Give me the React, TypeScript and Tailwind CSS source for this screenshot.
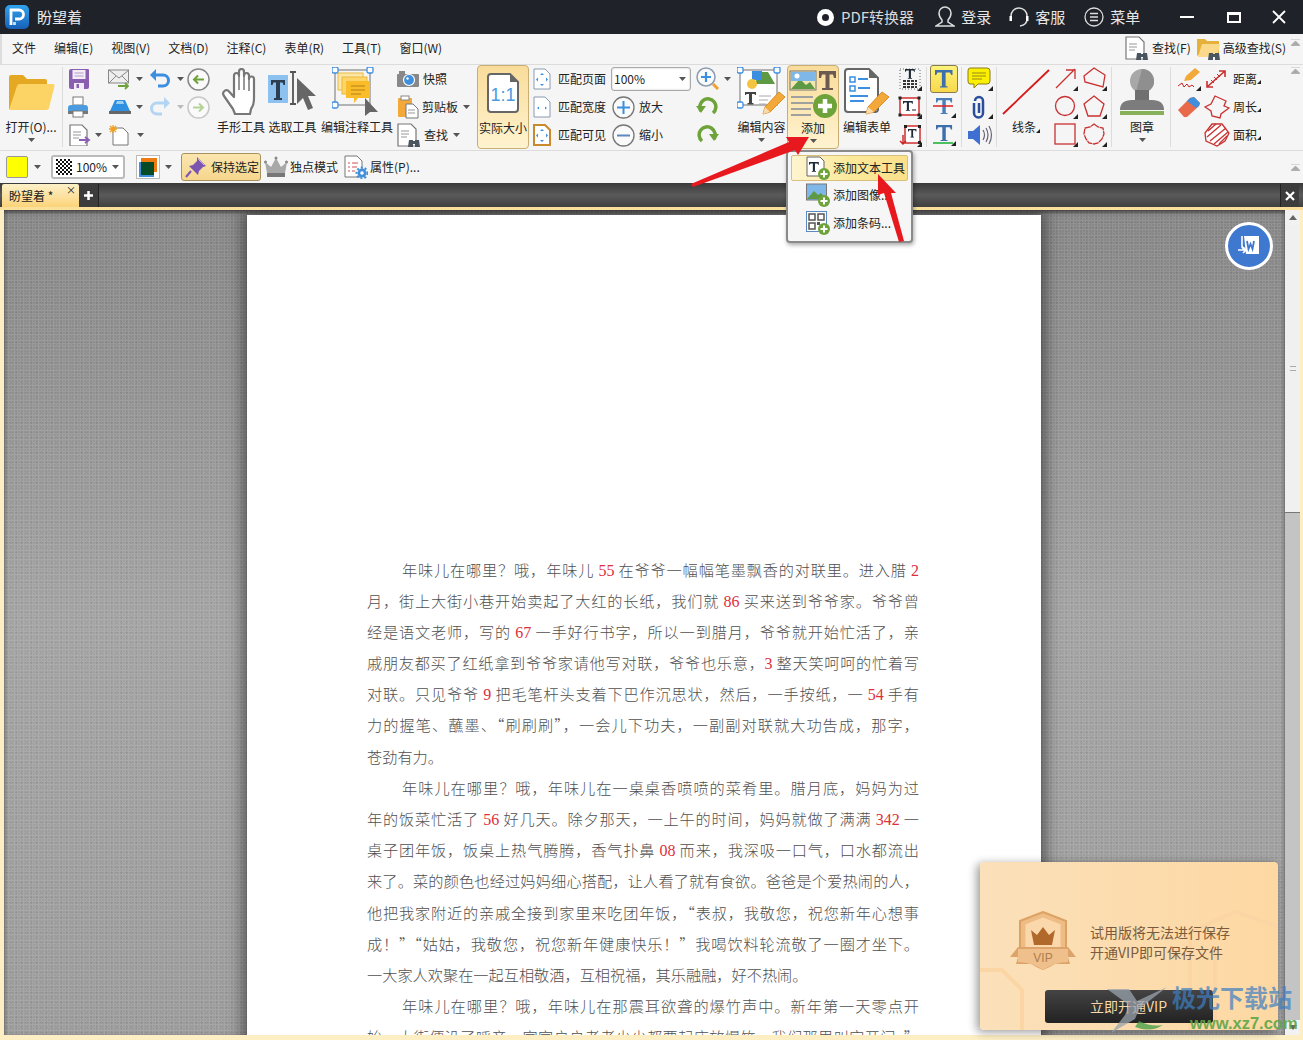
import React from "react";

const Caret = ({ c = "#555" }: { c?: string }) => (
  <svg width="7" height="4" viewBox="0 0 7 4" className="shrink-0"><path d="M0 0h7L3.500 4z" fill={c} /></svg>
);
const Tri = () => (
  <svg width="4" height="4" viewBox="0 0 4 4" className="mb-[2px] self-end shrink-0"><path d="M4 4H0l4-4z" fill="#222" /></svg>
);
const Corner = ({ x, y }: { x: number; y: number }) => <path d={`M${x} ${y}h-5l5-5z`} fill="#222" />;

const Logo = () => (
  <svg width="24" height="24" viewBox="0 0 24 24">
    <defs><linearGradient id="lg" x1="0" y1="0" x2="0" y2="1"><stop offset="0" stopColor="#2fa4ee" /><stop offset="1" stopColor="#1761b8" /></linearGradient></defs>
    <rect width="24" height="24" rx="5" fill="url(#lg)" />
    <path d="M6 20V5h8a4.500 4.500 0 0 1 0 9H10" fill="none" stroke="#fff" strokeWidth="2.800" />
    <path d="M9.500 20v-3" stroke="#bfe6ff" strokeWidth="2.800" />
  </svg>
);

const Folder = () => (
  <svg width="48" height="38" viewBox="0 0 48 38">
    <path d="M2 35V3q0-2 2-2h12l4 4h18q2 0 2 2v8H12L6 35z" fill="#e5a823" />
    <path d="M2 36 10 12q.5-2 2.500-2H46q2 0 1.500 2L42 34q-.5 2-2.500 2z" fill="#fbd465" />
  </svg>
);
const Save = () => (
  <svg width="22" height="22" viewBox="0 0 22 22">
    <path d="M1 3q0-2 2-2h17q1 0 1 1v17q0 2-2 2H3q-2 0-2-2z" fill="#8a5fb0" />
    <rect x="4.500" y="2" width="13" height="9" fill="#f2ecf7" /><path d="M6.500 5h9M6.500 8h9" stroke="#b59acb" />
    <rect x="6" y="15" width="10" height="6" fill="#f2ecf7" /><rect x="8.500" y="16" width="2.500" height="4" fill="#8a5fb0" />
  </svg>
);
const Print = () => (
  <svg width="22" height="22" viewBox="0 0 22 22">
    <rect x="6" y="1" width="10" height="8" fill="#fff" stroke="#7a7a7a" />
    <path d="M1 12q0-3 3-3h14q3 0 3 3v4H1z" fill="#4a9be0" /><rect x="1" y="15" width="20" height="3" fill="#777" />
    <rect x="6" y="15" width="10" height="6" fill="#fff" stroke="#7a7a7a" />
  </svg>
);
const Doc = ({ w = 18, h = 22, s = "#777" }: { w?: number; h?: number; s?: string }) => (
  <path d={`M1 1h${w - 6}l5 5v${h - 6}H1z`} fill="#fff" stroke={s} strokeWidth="1.200" />
);
const ExportI = () => (
  <svg width="23" height="22" viewBox="0 0 23 22">
    <Doc /><path d="M4 8h8M4 11h8M4 14h6" stroke="#999" /><path d="M10 16h9m-3-3 4 3-4 3" fill="none" stroke="#8a5fb0" strokeWidth="1.800" />
  </svg>
);
const Mail = () => (
  <svg width="21" height="22" viewBox="0 0 21 22">
    <rect x="0.500" y="2" width="20" height="13" fill="#eee" stroke="#888" /><path d="m1 2 10 8 10-8M1 15l7-7M21 15l-7-7" fill="none" stroke="#888" />
    <path d="M10 18h10m-3-3 3 3-3 3" fill="none" stroke="#6ea33a" strokeWidth="1.800" />
  </svg>
);
const Stamp = () => (
  <svg width="24" height="16" viewBox="0 0 24 16">
    <path d="M7 1h10l5 11H2z" fill="#2f8fe0" /><path d="M9 2h6l1 3H8z" fill="#9bd0f5" /><rect x="1" y="12" width="22" height="3" fill="#666" />
  </svg>
);
const NewDoc = () => (
  <svg width="22" height="22" viewBox="0 0 22 22">
    <path d="M5 4h10l5 5v12H5z" fill="#fff" stroke="#777" /><path d="M5 1v8M1 5h8M2 2l6 6M8 2 2 8" stroke="#f0a020" strokeWidth="1.300" />
  </svg>
);
const Undo = ({ c = "#3b8ee0" }: { c?: string }) => (
  <svg width="22" height="20" viewBox="0 0 22 20">
    <path d="M5 6h9a5 5 0 0 1 0 11H9" fill="none" stroke={c} strokeWidth="3" /><path d="M7 0 1 6l6 6z" fill={c} />
  </svg>
);
const Redo = ({ c = "#b3d5f3" }: { c?: string }) => (
  <svg width="22" height="20" viewBox="0 0 22 20">
    <path d="M17 6H8a5 5 0 0 0 0 11h5" fill="none" stroke={c} strokeWidth="3" /><path d="m15 0 6 6-6 6z" fill={c} />
  </svg>
);
const NavCircle = ({ back, c, b }: { back?: boolean; c: string; b: string }) => (
  <svg width="23" height="23" viewBox="0 0 23 23">
    <circle cx="11.500" cy="11.500" r="10.500" fill="#fafafa" stroke={b} strokeWidth="1.500" />
    <path d={back ? "M17 11.500H7m4-4-4 4 4 4" : "M6 11.500h10m-4-4 4 4-4 4"} fill="none" stroke={c} strokeWidth="2" />
  </svg>
);
const Hand = () => (
  <svg width="38" height="48" viewBox="0 0 38 48">
    <path d="M12 28V8q0-3 2.500-3T17 8v-4q0-3 2.500-3T22 4v4q0-3 2.500-3T27 8v3q0-2.500 2.500-2.500T32 11v19q0 7-3 11l-1 5H13l-2-5-9-13q-2-3 .5-5t5 1l4.500 5z" fill="#fff" stroke="#777" strokeWidth="2.200" strokeLinejoin="round" />
    <path d="M17 8v14M22 8v14M27 11v12" stroke="#777" strokeWidth="1.500" />
  </svg>
);
const SelectT = () => (
  <svg width="50" height="42" viewBox="0 0 50 42">
    <rect x="0" y="4" width="20" height="28" fill="#8cc1f0" />
    <path d="M3 9h14v5h-1.500l-1-2.500H12V27h2v2H6v-2h2V11.500H5.500l-1 2.500H3z" fill="#2c3e50" />
    <path d="M22 1h3m3 0h-3v32m-3 0h6" fill="none" stroke="#555" strokeWidth="1.800" />
    <path d="M29 7v26l6-6 5 12 5-2-5-12h8z" fill="#666" />
  </svg>
);
const Handle = ({ x, y }: { x: number; y: number }) => <rect x={x - 3} y={y - 3} width="6" height="6" rx="1.500" fill="#fff" stroke="#3b8ee0" strokeWidth="1.300" />;
const Annot = () => (
  <svg width="50" height="50" viewBox="0 0 50 50">
    <rect x="3" y="3" width="35" height="35" fill="none" stroke="#888" strokeWidth="1.200" />
    <rect x="6" y="6" width="25" height="17" fill="#fde7a8" stroke="#e9b93c" /><rect x="10" y="10" width="25" height="17" fill="#fdd56a" stroke="#e9b93c" />
    <path d="M14 14h24v17H26l-4 5v-5h-8z" fill="#fbbc2a" /><path d="M19 19h14M19 23h14M19 27h10" stroke="#b5801a" />
    <Handle x={3} y={3} /><Handle x={38} y={3} /><Handle x={3} y={38} />
    <path d="M33 31v18l5-4 8 0z" fill="#666" />
  </svg>
);
const Camera = () => (
  <svg width="22" height="16" viewBox="0 0 22 16">
    <rect x="0" y="3" width="22" height="13" rx="1" fill="#888" /><rect x="2" y="0" width="6" height="3" fill="#888" />
    <circle cx="12" cy="9" r="5.500" fill="#3f8fdd" stroke="#fff" strokeWidth="1.200" /><circle cx="10.500" cy="7.500" r="1.200" fill="#fff" />
  </svg>
);
const Clip = () => (
  <svg width="22" height="24" viewBox="0 0 22 24">
    <rect x="1" y="3" width="14" height="19" rx="1" fill="#f3a93a" /><rect x="4" y="1" width="8" height="4" fill="#fff" stroke="#888" />
    <path d="M9 9h7l5 5v9H9z" fill="#fff" stroke="#777" /><path d="M11 15h7M11 18h7" stroke="#999" />
  </svg>
);
const FindDoc = ({ folder }: { folder?: boolean }) => (
  <svg width="24" height="24" viewBox="0 0 24 24">
    {folder ? (
      <><path d="M0 20V3h8l2 2h12v13H3z" fill="#e5b13a" /><path d="M1 21 5 8h18l-3 13z" fill="#fbd98a" /></>
    ) : (
      <><Doc w={19} h={23} /><path d="M4 8h8M4 11h8M4 14h6" stroke="#999" /></>
    )}
    <path d="M12 17h4v7h-5zM18 17h4l1 7h-5z" fill="#4a5560" /><rect x="15" y="18" width="4" height="3" fill="#4a5560" />
  </svg>
);
const ActualI = () => (
  <svg width="34" height="42" viewBox="0 0 34 42">
    <path d="M2 5q0-3 3-3h19l8 8v27q0 3-3 3H5q-3 0-3-3z" fill="#fff" stroke="#666" strokeWidth="2" />
    <path d="M24 2v8h8z" fill="#666" />
    <text x="17" y="29" textAnchor="middle" fontSize="18" fill="#4a9be0" fontFamily="Liberation Sans, sans-serif">1:1</text>
  </svg>
);
const FitI = ({ kind }: { kind: number }) => (
  <svg width="18" height="22" viewBox="0 0 18 22">
    <path d="M1 1h11l5 5v15H1z" fill="#fff" stroke={kind === 2 ? "#c98a2e" : "#8a9bb0"} strokeWidth={kind === 2 ? 2 : 1} />
    {kind === 1 ? (
      <path d="M4 12 6 10.500v3zM14 12 12 10.500v3z" fill="#3b8ee0" />
    ) : (
      <path d="M9 5l2 2H7zM9 18l2-2H7zM3 11.500l2-2v4zM15 11.500l-2-2v4z" fill="#3b8ee0" />
    )}
  </svg>
);
const ZoomBtn = ({ plus }: { plus?: boolean }) => (
  <svg width="23" height="23" viewBox="0 0 23 23">
    <circle cx="11.500" cy="11.500" r="10.500" fill="#fafafa" stroke="#777" strokeWidth="1.300" />
    <path d={plus ? "M5 11.500h13M11.500 5v13" : "M5 11.500h13"} stroke={plus ? "#3b8ee0" : "#5a8ac0"} strokeWidth="2" />
  </svg>
);
const ZoomGlass = () => (
  <svg width="24" height="24" viewBox="0 0 24 24">
    <circle cx="10" cy="10" r="9" fill="#fafafa" stroke="#8a9bb0" strokeWidth="1.500" /><path d="M5 10h10M10 5v10" stroke="#3b8ee0" strokeWidth="2.200" />
    <path d="m17 17 5 5" stroke="#f0a030" strokeWidth="3" />
  </svg>
);
const Rotate = ({ flip }: { flip?: boolean }) => (
  <svg width="23" height="20" viewBox="0 0 23 20" className={flip ? "-scale-x-100" : ""}>
    <path d="M5 14A8 8 0 1 1 17 16" fill="none" stroke="#6ea33a" strokeWidth="3.500" />
    <path d="M0 9h10l-5 7z" fill="#6ea33a" />
  </svg>
);
const EditContent = () => (
  <svg width="50" height="50" viewBox="0 0 50 50">
    <rect x="3" y="3" width="37" height="35" fill="#fff" stroke="#888" strokeWidth="1.200" />
    <path d="M22 5h9l-0 0 7 12H18z" fill="#5e9a44" /><rect x="15" y="4" width="10" height="9" fill="#3b8ee0" /><circle cx="15" cy="17" r="5" fill="#f3c43e" />
    <path d="M8 25h11v3h-1l-.5-1H15v9h1.500v1.500h-6V36H12v-9H9.500l-.5 1H8z" fill="#444" />
    <path d="M22 29h12M22 33h9M22 37h7" stroke="#aaa" />
    <Handle x={3} y={3} /><Handle x={40} y={3} /><Handle x={3} y={38} />
    <path d="m26 47 2-7 14-15 6 5-15 15z" fill="#f3a93a" stroke="#d98b22" /><path d="m26 47 2-7 5 5z" fill="#f8dcb0" />
  </svg>
);
const AddBig = () => (
  <svg width="48" height="50" viewBox="0 0 48 50">
    <rect x="1" y="3" width="26" height="19" fill="#f3e6b0" stroke="#777" /><path d="M2 21 11 11l6 6 4-3 5 7z" fill="#5e9a44" /><rect x="2" y="4" width="24" height="9" fill="#7fb8e8" /><circle cx="8" cy="8" r="2.500" fill="#fff" />
    <path d="M30 3h17v7h-2l-1-3.500h-3.500V20H44v2H33v-2h3.500V6.500H33L32 10h-2z" fill="#6a5a50" />
    <path d="M2 29h22M2 35h22M2 41h20M2 47h20" stroke="#a0a0a0" strokeWidth="2" />
    <circle cx="36" cy="38" r="12" fill="#6ea33a" /><path d="M29 38h14M36 31v14" stroke="#fff" strokeWidth="4.500" />
  </svg>
);
const EditForm = () => (
  <svg width="48" height="50" viewBox="0 0 48 50">
    <path d="M2 5q0-3 3-3h21l9 9v31q0 3-3 3H5q-3 0-3-3z" fill="#fff" stroke="#666" strokeWidth="2" /><path d="M26 2v9h9z" fill="#666" />
    <path d="M7 10h5v5H7zM7 19h5v5H7z" fill="none" stroke="#3b8ee0" strokeWidth="1.500" /><path d="M15 12h10M15 21h12M7 29h18M7 34h14" stroke="#3b8ee0" strokeWidth="1.800" />
    <path d="m23 47 2-7 14-15 7 5-15 15z" fill="#f3a93a" stroke="#d98b22" /><path d="m23 47 2-7 6 5z" fill="#f8dcb0" />
  </svg>
);
const TGlyph = ({ c = "#1f2a36", x = 0, y = 0, s = 1 }: { c?: string; x?: number; y?: number; s?: number }) => (
  <path transform={`translate(${x} ${y}) scale(${s})`} d="M0 0h14v4h-1l-1-2H8.500v11H10v1H4v-1h1.500V2H2L1 4H0z" fill={c} />
);
const Tool1 = () => (
  <svg width="24" height="24" viewBox="0 0 24 24">
    <rect x="2" y="2" width="20" height="20" fill="none" stroke="#666" strokeDasharray="1 2" /><TGlyph x={7} y={2} s={0.7} />
    <path d="M5 14h14M5 17h14M5 20h14" stroke="#333" strokeWidth="2" strokeDasharray="3 1" /><Corner x={24} y={24} />
  </svg>
);
const Tool2 = () => (
  <svg width="24" height="24" viewBox="0 0 24 24">
    <rect x="2" y="3" width="19" height="17" fill="#fff" stroke="#c22" strokeWidth="1.400" /><TGlyph x={5} y={6} s={0.7} /><path d="M14 15h4" stroke="#222" />
    <rect x="0.500" y="1.500" width="3" height="3" fill="#222" /><rect x="19.500" y="1.500" width="3" height="3" fill="#222" /><rect x="0.500" y="18.500" width="3" height="3" fill="#222" /><rect x="19.500" y="18.500" width="3" height="3" fill="#222" /><Corner x={24} y={24} />
  </svg>
);
const Tool3 = () => (
  <svg width="24" height="24" viewBox="0 0 24 24">
    <rect x="7" y="3" width="15" height="17" fill="#fff" stroke="#c22" strokeWidth="1.400" /><TGlyph x={10} y={6} s={0.6} />
    <path d="M5 12v9m-3-3 3 3 3-3" fill="none" stroke="#c22" strokeWidth="1.400" /><rect x="6" y="2" width="3" height="3" fill="#222" /><rect x="20" y="2" width="3" height="3" fill="#222" /><rect x="20" y="18" width="3" height="3" fill="#222" /><Corner x={24} y={24} />
  </svg>
);
const THigh = () => (
  <svg width="18" height="18" viewBox="0 0 18 18"><TGlyph c="#3d6fae" x={0} y={0} s={1.250} /></svg>
);
const TStrike = () => (
  <svg width="24" height="22" viewBox="0 0 24 22"><TGlyph c="#4a7fb8" x={4} y={2} s={1.150} /><path d="M1 10h20" stroke="#d22" strokeWidth="1.500" /><Corner x={24} y={22} /></svg>
);
const TUnder = () => (
  <svg width="24" height="22" viewBox="0 0 24 22"><TGlyph c="#3d6fae" x={4} y={1} s={1.150} /><path d="M1 19h20" stroke="#4cc060" strokeWidth="2" /><Corner x={24} y={22} /></svg>
);
const Note = () => (
  <svg width="26" height="24" viewBox="0 0 26 24">
    <path d="M3 1h17q3 0 3 3v10q0 3-3 3H11l-4 4v-4H3q-2 0-2-3V4q0-3 2-3z" fill="#fbf000" stroke="#8a7a1a" /><path d="M5 6h14M5 9h14M5 12h10" stroke="#9a8a1a" /><Corner x={26} y={24} />
  </svg>
);
const Paperclip = () => (
  <svg width="26" height="24" viewBox="0 0 26 24">
    <path d="M8 6a4 4 0 0 1 8 0v12a4.500 4.500 0 0 1-9 0V8m5 0v10" fill="none" stroke="#2a4d9c" strokeWidth="2.500" /><Corner x={26} y={24} />
  </svg>
);
const Speaker = () => (
  <svg width="26" height="22" viewBox="0 0 26 22">
    <path d="M1 7h5l7-6v20l-7-6H1z" fill="#3f6fd0" /><path d="M16 6q3 5 0 10M19 4q4 7 0 14M22 2q5 9 0 18" fill="none" stroke="#667" strokeWidth="1.200" />
  </svg>
);
const Line = () => (
  <svg width="48" height="46" viewBox="0 0 48 46"><path d="m1 45 46-44" stroke="#d61a1a" strokeWidth="1.800" /></svg>
);
const S = ({ children }: { children: React.ReactNode }) => (
  <svg width="24" height="24" viewBox="0 0 24 24" fill="none" stroke="#c93030" strokeWidth="1.300">{children}<path d="M24 24h-5l5-5z" fill="#222" stroke="none" /></svg>
);
const Seal = () => (
  <svg width="46" height="48" viewBox="0 0 46 48">
    <circle cx="23" cy="13" r="12" fill="#a8a8a8" /><path d="M23 1a12 12 0 0 1 8 21L17 24z" fill="#8f8f8f" />
    <path d="M16 22h14v10H16z" fill="#707070" /><path d="M1 42q0-10 12-10h20q12 0 12 10z" fill="#7c7c7c" />
    <rect x="1" y="43" width="44" height="4" fill="#86b15a" />
  </svg>
);
const Pencil = () => (
  <svg width="24" height="24" viewBox="0 0 24 24">
    <path d="m7 14 2-5 9-8 5 4-9 8z" fill="#f3a93a" /><path d="M1 19l4-3 2 4 3-3 2 3 3-2 2 2" fill="none" stroke="#c22" /><Corner x={24} y={24} />
  </svg>
);
const Eraser = () => (
  <svg width="24" height="22" viewBox="0 0 24 22">
    <path d="M1 14 13 2l4-1 6 6-1 3L10 21H7z" fill="#e86a4a" /><path d="m13 2 4-1 6 6-1 3-3 2-9-7z" fill="#3f8fdd" />
  </svg>
);
const Dist = () => (
  <svg width="24" height="22" viewBox="0 0 24 22">
    <path d="m3 19 18-16M3 13v6h6M15 3h6v6" fill="none" stroke="#c93030" strokeWidth="1.600" /><path d="m7 12 3 3M10 9l3 3M13 6l3 3" stroke="#c93030" />
  </svg>
);
const Perim = () => (
  <svg width="26" height="24" viewBox="0 0 26 24">
    <path d="M11 1 22 6l-2 5 5 2-8 6-1 4-8-2-1-5-6-4 6-3z" fill="none" stroke="#c93030" strokeWidth="1.300" />
  </svg>
);
const AreaI = () => (
  <svg width="26" height="24" viewBox="0 0 26 24">
    <path d="M8 1h10l7 9-4 8-8 5-11-5L1 10z" fill="#fff" stroke="#c93030" strokeWidth="1.300" /><path d="M4 8 12 1M3 14 17 2M6 18 22 5M10 21 24 9M15 21l8-8" stroke="#c93030" strokeWidth="1.300" />
  </svg>
);
const Checker = () => (
  <svg width="20" height="20" viewBox="0 0 20 20">
    <defs><pattern id="ck" width="4" height="4" patternUnits="userSpaceOnUse"><rect width="4" height="4" fill="#fff" /><rect width="2" height="2" fill="#111" /><rect x="2" y="2" width="2" height="2" fill="#111" /></pattern></defs>
    <rect x="2" y="2" width="16" height="16" fill="url(#ck)" />
  </svg>
);
const ColorI = () => (
  <svg width="24" height="24" viewBox="0 0 24 24">
    <rect x="0.500" y="0.500" width="23" height="23" fill="#fff" stroke="#bbb" /><rect x="5" y="3" width="16" height="14" fill="#ee7b12" /><rect x="3" y="7" width="15" height="15" fill="#3f8fdd" /><rect x="5" y="7" width="13" height="13" fill="#064a26" />
  </svg>
);
const Pin = () => (
  <svg width="22" height="22" viewBox="0 0 22 22">
    <path d="m12 1 9 9-3 1-4 4-1 4-9-9 4-1 4-4z" fill="#7a56b0" /><path d="M6 15 1 21" stroke="#7a56b0" strokeWidth="2" />
    <path d="m13 3 6 6" stroke="#c8b4e0" />
  </svg>
);
const Crown = () => (
  <svg width="24" height="22" viewBox="0 0 24 22">
    <path d="m1 6 6 5 5-9 5 9 6-5-2 11H3z" fill="#a8a8a8" /><rect x="3" y="17" width="18" height="4" fill="#777" /><circle cx="12" cy="2" r="1.500" fill="#888" /><circle cx="1.500" cy="6" r="1.500" fill="#888" /><circle cx="22.500" cy="6" r="1.500" fill="#888" />
  </svg>
);
const PropI = () => (
  <svg width="24" height="24" viewBox="0 0 24 24">
    <path d="M1 1h12l5 5v16H1z" fill="#fff" stroke="#777" /><path d="M4 8h2M8 8h6M4 12h2M8 12h5M4 16h2M8 16h3" stroke="#d05050" />
    <circle cx="18" cy="18" r="4.500" fill="#3f8fdd" /><circle cx="18" cy="18" r="5.500" fill="none" stroke="#3f8fdd" strokeWidth="2" strokeDasharray="2 2" /><circle cx="18" cy="18" r="1.800" fill="#fff" />
  </svg>
);
const AddT = () => (
  <svg width="24" height="24" viewBox="0 0 24 24">
    <path d="M1 1h13l4 4v15H1z" fill="#fff" stroke="#666" /><TGlyph x={3} y={6} s={0.7} /><circle cx="18" cy="18" r="6" fill="#6ea33a" /><path d="M14.500 18h7M18 14.500v7" stroke="#fff" strokeWidth="2" />
  </svg>
);
const AddImg = () => (
  <svg width="24" height="24" viewBox="0 0 24 24">
    <rect x="0.500" y="1" width="20" height="16" fill="#7fb8e8" stroke="#777" /><path d="m1 16 7-8 4 4 3-2 5 6z" fill="#5e9a44" /><circle cx="18" cy="18" r="6" fill="#6ea33a" /><path d="M14.500 18h7M18 14.500v7" stroke="#fff" strokeWidth="2" />
  </svg>
);
const AddQR = () => (
  <svg width="24" height="24" viewBox="0 0 24 24">
    <rect x="0.500" y="0.500" width="20" height="20" fill="#fff" stroke="#5a8ac0" /><path d="M3 3h6v6H3zM12 3h6v6h-6zM3 12h6v6H3z" fill="none" stroke="#555" strokeWidth="1.500" /><path d="M11 11h3v3h-3z" fill="#555" /><circle cx="18" cy="18" r="6" fill="#6ea33a" /><path d="M14.500 18h7M18 14.500v7" stroke="#fff" strokeWidth="2" />
  </svg>
);
const Collapse = () => (
  <svg width="9" height="7" viewBox="0 0 9 7"><path d="M0 0h9M4.500 2 9 6.500H0z" stroke="#aaa" fill="#aaa" strokeWidth=".8" /></svg>
);
const VipBadge = () => (
  <svg width="66" height="62" viewBox="0 0 66 62">
    <path d="M10 10 33 1l23 9v28q0 10-23 20Q10 48 10 38z" fill="#eebd86" stroke="#dca264" strokeWidth="2" />
    <path d="M15 13 33 6l18 7v24q0 8-18 16-18-8-18-16z" fill="#fbd8ac" stroke="#efbd84" />
    <path d="m21 19 6 5 6-8 6 8 6-5-3 15H24z" fill="#b0692a" />
    <path d="M8 36 0 46h8l-2 7h54l-2-7h8l-8-10z" fill="#dca46a" /><path d="M8 38h50v13q-13 0-25 8-12-8-25-8z" fill="#efc08c" />
    <text x="33" y="51" textAnchor="middle" fontSize="12" fill="#ad7f4e" fontFamily="Liberation Sans, sans-serif">VIP</text>
  </svg>
);

const Big = ({ cls, label, icon, active, caret, h = "h-[54px]" }: { cls: string; label: string; icon: React.ReactNode; active?: boolean; caret?: boolean; h?: string }) => (
  <div className={`${cls} h-[84px] flex flex-col items-center shrink-0 rounded-sm ${active ? "border border-[#c8ae72] bg-gradient-to-b from-[#f9dc9a] to-[#fff3cf]" : ""}`}>
    <div className={`${h} flex items-center justify-center`}>{icon}</div>
    <div className="text-[12px] leading-[16px] whitespace-nowrap">{label}</div>
    {caret && <div className="mt-[3px]"><Caret /></div>}
  </div>
);
const Row = ({ children, cls = "" }: { children: React.ReactNode; cls?: string }) => (
  <div className={`h-[28px] flex items-center ${cls}`}>{children}</div>
);
const Sep = ({ cls }: { cls: string }) => <div className={`${cls} w-px h-[80px] mt-[2px] bg-[#dcdcdc] shrink-0`} />;

const body: [string, number][] = [
  ["年味儿在哪里？哦，年味儿 55 在爷爷一幅幅笔墨飘香的对联里。进入腊 2", 1],
  ["月，街上大街小巷开始卖起了大红的长纸，我们就 86 买来送到爷爷家。爷爷曾", 0],
  ["经是语文老师，写的 67 一手好行书字，所以一到腊月，爷爷就开始忙活了，亲", 0],
  ["戚朋友都买了红纸拿到爷爷家请他写对联，爷爷也乐意，3 整天笑呵呵的忙着写", 0],
  ["对联。只见爷爷 9 把毛笔杆头支着下巴作沉思状，然后，一手按纸，一 54 手有", 0],
  ["力的握笔、蘸墨、“刷刷刷”，一会儿下功夫，一副副对联就大功告成，那字，", 0],
  ["苍劲有力。", 2],
  ["年味儿在哪里？哦，年味儿在一桌桌香喷喷的菜肴里。腊月底，妈妈为过", 1],
  ["年的饭菜忙活了 56 好几天。除夕那天，一上午的时间，妈妈就做了满满 342 一", 0],
  ["桌子团年饭，饭桌上热气腾腾，香气扑鼻 08 而来，我深吸一口气，口水都流出", 0],
  ["来了。菜的颜色也经过妈妈细心搭配，让人看了就有食欲。爸爸是个爱热闹的人，", 0],
  ["他把我家附近的亲戚全接到家里来吃团年饭，“表叔，我敬您，祝您新年心想事", 0],
  ["成！”“姑姑，我敬您，祝您新年健康快乐！”我喝饮料轮流敬了一圈才坐下。", 0],
  ["一大家人欢聚在一起互相敬酒，互相祝福，其乐融融，好不热闹。", 2],
  ["年味儿在哪里？哦，年味儿在那震耳欲聋的爆竹声中。新年第一天零点开", 1],
  ["始，大街便没了呼音，家家户户老老少少都要起床放爆竹，我们那里叫它开门。”", 0],
];

export default function App() {
  return (
    <div className="relative w-[1303px] h-[1040px] overflow-hidden flex flex-col bg-[#f5f5f5] text-[#222] font-['Noto_Sans_CJK_SC',sans-serif]">
      {/* title bar */}
      <div className="h-[34px] shrink-0 bg-[#1f2229] flex items-center text-[#e6e6e6] text-[15px]">
        <div className="ml-[5px]"><Logo /></div>
        <div className="ml-[8px]">盼望着</div>
        <div className="ml-[735px] flex items-center gap-[7px]">
          <svg width="17" height="17" viewBox="0 0 17 17"><circle cx="8.500" cy="8.500" r="6" fill="none" stroke="#fff" strokeWidth="5" /></svg>
          <span className="text-[#d8d8d8]">PDF转换器</span>
        </div>
        <div className="ml-[21px] flex items-center gap-[6px]">
          <svg width="20" height="22" viewBox="0 0 20 22" fill="none" stroke="#ddd" strokeWidth="1.500"><path d="M7 14Q4 11 4 7a6 6 0 0 1 12 0q0 4-3 7v2l6 4H1l6-4z" /></svg>
          <span>登录</span>
        </div>
        <div className="ml-[18px] flex items-center gap-[6px]">
          <svg width="20" height="22" viewBox="0 0 20 22" fill="none" stroke="#ddd" strokeWidth="1.500"><path d="M2 12V10a8 8 0 0 1 16 0v2" /><path d="M18 13q0 6-7 7" /><rect x="0.500" y="10" width="2.500" height="5" fill="#fff" stroke="none" /><rect x="17" y="10" width="2.500" height="5" fill="#fff" stroke="none" /></svg>
          <span>客服</span>
        </div>
        <div className="ml-[19px] flex items-center gap-[6px]">
          <svg width="20" height="20" viewBox="0 0 20 20" fill="none" stroke="#ddd" strokeWidth="1.300"><circle cx="10" cy="10" r="9" /><path d="M6 6.500h8M6 10h8M6 13.500h8" strokeWidth="1.600" /></svg>
          <span>菜单</span>
        </div>
        <div className="ml-[40px] w-[14px] h-[2px] bg-white" />
        <div className="ml-[33px] w-[14px] h-[11px] border-2 border-white border-t-[3px]" />
        <svg className="ml-[31px]" width="14" height="14" viewBox="0 0 14 14"><path d="m1 1 12 12M13 1 1 13" stroke="#fff" strokeWidth="1.800" /></svg>
      </div>

      {/* menu */}
      <div className="h-[30px] shrink-0 flex items-center pl-[10px] pb-[2px] text-[12px] gap-[18px] relative border-l-2 border-[#ddd]">
        {["文件", "编辑(E)", "视图(V)", "文档(D)", "注释(C)", "表单(R)", "工具(T)", "窗口(W)"].map((t) => <span key={t}>{t}</span>)}
        <div className="ml-auto flex items-center">
          <FindDoc /><span className="ml-[3px]">查找(F)</span>
          <div className="ml-[6px]"><FindDoc folder /></div><span className="ml-[2px]">高级查找(S)</span>
          <div className="ml-[5px] mr-[3px] -mt-[12px]"><Collapse /></div>
        </div>
      </div>

      {/* ribbon */}
      <div className="h-[87px] shrink-0 flex items-start border-t border-b border-[#dcdcdc] pl-[5px]">
        <div className="w-[52px] h-[84px] flex flex-col items-center shrink-0">
          <div className="h-[54px] flex items-center pt-[2px]"><Folder /></div>
          <div className="text-[12px] leading-[16px]">打开(O)...</div>
          <div className="mt-[3px]"><Caret /></div>
        </div>
        <Sep cls="ml-[5px]" />
        <div className="ml-[3px] w-[147px] shrink-0">
          <Row><div className="ml-[2px] w-[40px]"><Save /></div><Mail /><div className="ml-[7px] w-[13px]"><Caret /></div><Undo /><div className="ml-[6px] w-[10px]"><Caret /></div><NavCircle back c="#6ea33a" b="#888" /></Row>
          <Row><div className="ml-[1px] w-[41px]"><Print /></div><Stamp /><div className="ml-[4px] w-[13px]"><Caret /></div><Redo /><div className="ml-[6px] w-[10px]"><Caret c="#bbb" /></div><NavCircle c="#b5d398" b="#c8c8c8" /></Row>
          <Row><div className="ml-[3px] w-[26px]"><ExportI /></div><div className="w-[13px]"><Caret /></div><NewDoc /><div className="ml-[7px]"><Caret /></div></Row>
        </div>
        <div className="ml-[3px]"><Big cls="w-[50px]" label="手形工具" icon={<Hand />} /></div>
        <Big cls="w-[53px]" label="选取工具" icon={<SelectT />} />
        <Big cls="w-[76px]" label="编辑注释工具" icon={<Annot />} />
        <div className="ml-[2px] w-[80px] shrink-0 text-[12px]">
          <Row><Camera /><span className="ml-[4px]">快照</span></Row>
          <Row><Clip /><span className="ml-[3px]">剪贴板</span><div className="ml-[5px]"><Caret /></div></Row>
          <Row><FindDoc /><span className="ml-[3px]">查找</span><div className="ml-[5px]"><Caret /></div></Row>
        </div>
        <Big cls="w-[52px]" label="实际大小" icon={<ActualI />} active />
        <div className="ml-[4px] w-[203px] shrink-0 text-[12px]">
          <Row>
            <div className="w-[25px]"><FitI kind={0} /></div><span>匹配页面</span>
            <div className="ml-[5px] w-[80px] h-[24px] border border-[#aaa] rounded-[3px] bg-white flex items-center justify-between pl-[2px] pr-[4px] shadow-[inset_0_0_2px_#bbb]"><span className="text-[12px]">100%</span><Caret /></div>
            <div className="ml-[5px]"><ZoomGlass /></div><div className="ml-[4px]"><Caret /></div>
          </Row>
          <Row>
            <div className="w-[25px]"><FitI kind={1} /></div><span>匹配宽度</span>
            <div className="ml-[6px]"><ZoomBtn plus /></div><span className="ml-[4px]">放大</span>
            <div className="ml-[33px]"><Rotate /></div>
          </Row>
          <Row>
            <div className="w-[25px]"><FitI kind={2} /></div><span>匹配可见</span>
            <div className="ml-[6px]"><ZoomBtn /></div><span className="ml-[4px]">缩小</span>
            <div className="ml-[33px]"><Rotate flip /></div>
          </Row>
        </div>
        <Big cls="w-[51px]" label="编辑内容" icon={<EditContent />} caret />
        <Big cls="w-[52px]" label="添加" icon={<AddBig />} caret active />
        <div className="ml-[3px]"><Big cls="w-[50px]" label="编辑表单" icon={<EditForm />} /></div>
        <div className="ml-[4px] w-[28px] shrink-0 flex flex-col items-center">
          <Row><Tool1 /></Row><Row><Tool2 /></Row><Row><Tool3 /></Row>
        </div>
        <Sep cls="ml-[2px]" />
        <div className="ml-[2px] w-[30px] shrink-0 flex flex-col items-center">
          <Row><div className="w-[28px] h-[28px] rounded-[3px] border border-[#8a7a50] bg-gradient-to-b from-[#fdf37a] to-[#f8d84a] flex items-center justify-center"><THigh /></div></Row>
          <Row><TStrike /></Row><Row><TUnder /></Row>
        </div>
        <Sep cls="ml-[2px]" />
        <div className="ml-[3px] w-[29px] shrink-0 flex flex-col items-center">
          <Row><Note /></Row><Row><Paperclip /></Row><Row><Speaker /></Row>
        </div>
        <Sep cls="ml-[2px]" />
        <div className="ml-[3px] w-[52px] shrink-0 flex flex-col items-center">
          <div className="h-[54px] flex items-center"><Line /></div>
          <div className="text-[12px] leading-[16px] flex items-end">线条<Tri /></div>
        </div>
        <div className="w-[28px] shrink-0 flex flex-col items-center">
          <Row><S><path d="m2 21 19-19M12 3h9v9" /></S></Row>
          <Row><S><circle cx="11" cy="11" r="9.500" /></S></Row>
          <Row><S><rect x="1" y="1" width="20" height="20" /></S></Row>
        </div>
        <div className="w-[30px] shrink-0 flex flex-col items-center">
          <Row><S><path d="M11 1 22 8l-2 12L2 15 1 9z" /></S></Row>
          <Row><S><path d="m11 1 10 8-4 12H5L1 9z" /></S></Row>
          <Row><S><path d="m11 1 4 3 5 1 1 6-2 5-4 4-4 1-5-1-3-4-2-5 1-6 5-1z" strokeDasharray="6 .6" /></S></Row>
        </div>
        <Sep cls="ml-px" />
        <div className="ml-[4px]"><Big cls="w-[52px]" label="图章" icon={<Seal />} caret /></div>
        <Sep cls="ml-[2px]" />
        <div className="ml-[3px] w-[30px] shrink-0 flex flex-col items-center">
          <Row><Pencil /></Row><Row><Eraser /></Row>
        </div>
        <div className="w-[64px] shrink-0 text-[12px]">
          <Row><Dist /><span className="ml-[5px]">距离</span><div className="h-[14px] flex"><Tri /></div></Row>
          <Row><Perim /><span className="ml-[3px]">周长</span><div className="h-[14px] flex"><Tri /></div></Row>
          <Row><AreaI /><span className="ml-[3px]">面积</span><div className="h-[14px] flex"><Tri /></div></Row>
        </div>
        <div className="ml-auto mr-[3px] mt-[2px]"><Collapse /></div>
      </div>

      {/* second toolbar */}
      <div className="h-[32px] shrink-0 flex items-center pl-[6px] text-[12px]">
        <div className="w-[22px] h-[22px] bg-[#ffff00] border border-[#999] rounded-[2px]" />
        <div className="ml-[6px]"><Caret /></div>
        <div className="ml-[10px] w-[74px] h-[24px] border-2 border-[#bbb] rounded-[3px] bg-white flex items-center pl-[1px] pr-[4px]"><Checker /><span className="ml-[2px] flex-1">100%</span><Caret /></div>
        <div className="ml-[11px]"><ColorI /></div>
        <div className="ml-[5px]"><Caret /></div>
        <div className="ml-[9px] w-[80px] h-[28px] rounded-[3px] border border-[#a8925c] bg-gradient-to-b from-[#fbe6b0] to-[#f6d68c] flex items-center pl-[3px]"><Pin /><span className="ml-[4px]">保持选定</span></div>
        <div className="ml-[3px]"><Crown /></div><span className="ml-[2px]">独点模式</span>
        <div className="ml-[6px]"><PropI /></div><span className="ml-[2px]">属性(P)...</span>
        <div className="ml-auto mr-[3px] flex flex-col gap-[18px]"><Collapse /></div>
      </div>

      {/* tab bar */}
      <div className="h-[27px] shrink-0 bg-gradient-to-b from-[#3a3a3a] via-[#5a5a5a] to-[#404040] flex items-end border-b-[3px] border-[#fbe09b] pl-[2px]">
        <div className="w-[77px] h-[23px] bg-gradient-to-b from-[#fdf0c8] to-[#fbd478] rounded-t-[2px] flex items-center pl-[7px] text-[12px] relative">
          盼望着 *
          <span className="absolute right-[3px] top-0 text-[10px] leading-[12px]">×</span>
        </div>
        <div className="w-[20px] h-[23px] flex items-center justify-center bg-[#3c3c3c] border-r border-[#222]">
          <svg width="9" height="9" viewBox="0 0 9 9"><path d="M4.500 0v9M0 4.500h9" stroke="#fff" strokeWidth="2.500" /></svg>
        </div>
        <div className="ml-auto mr-[4px] w-[19px] h-[23px] flex items-center justify-center border-l border-[#222] bg-[#3c3c3c]">
          <svg width="10" height="10" viewBox="0 0 10 10"><path d="m1 1 8 8M9 1 1 9" stroke="#fff" strokeWidth="2.200" /></svg>
        </div>
      </div>

      {/* workspace */}
      <div className="flex-1 min-h-0 flex border-l-[4px] border-r-[3px] border-b-[5px] border-[#fdeec4] bg-[#888]">
        <div className="relative flex-1 min-w-0 overflow-hidden flex justify-center items-start pt-[5px] bg-[radial-gradient(circle,rgba(255,255,255,0.10)_1px,transparent_1.200px),radial-gradient(circle,rgba(0,0,0,0.07)_1px,transparent_1.200px),linear-gradient(180deg,#858585,#a3a3a3_50%,#9b9b9b)] bg-[length:3px_3px,5px_5px,100%_100%] shadow-[inset_0_2px_4px_rgba(0,0,0,0.6)]">
          <div className="w-[794px] h-[1123px] shrink-0 mr-px bg-white pt-[338.5px] pl-[120px] pr-[122px] shadow-[0_0_14px_4px_rgba(40,40,40,0.65)] text-[15.2px] text-[#505050] font-light">
            {body.map(([t, k], i) => (
              <div key={i} className={`h-[31.2px] leading-[31.2px] whitespace-nowrap ${k === 2 ? "" : "[text-align-last:justify]"} ${k === 1 ? "pl-[35px]" : ""}`}>
                {t.split(/(\d+)/).map((p, j) => j % 2 ? <span key={j} className="text-[#dc2f3c] text-[16px] font-['Liberation_Serif',serif]">{p}</span> : p)}
              </div>
            ))}
          </div>
        </div>
        <div className="w-[15px] shrink-0 flex flex-col bg-[#c4c4c4]">
          <div className="h-[15px] bg-[#f2f2f2] flex items-center justify-center"><svg width="8" height="5" viewBox="0 0 8 5"><path d="M0 5h8L4 0z" fill="#666" /></svg></div>
          <div className="h-[288px] bg-[#f0f0f0] border-b border-[#777] flex items-center justify-center"><div className="w-[6px] h-[5px] border-y border-[#aaa]" /></div>
          <div className="flex-1" />
          <div className="h-[15px] bg-[#f2f2f2] flex items-center justify-center"><svg width="8" height="5" viewBox="0 0 8 5"><path d="M0 0h8L4 5z" fill="#666" /></svg></div>
        </div>
      </div>

      {/* round floating button */}
      <div className="absolute left-[1225px] top-[222px] w-[48px] h-[48px] rounded-full bg-[#3f79cf] border-[3px] border-white flex items-center justify-center">
        <svg width="24" height="24" viewBox="0 0 24 24"><path d="M7 2h15v18H9" fill="#fff" /><path d="m10 7 1.500 8 2-5 2 5L17 7" fill="none" stroke="#3f79cf" strokeWidth="1.800" /><path d="M5 2v10q0 3 3 3M1 16h8m-3-3 3 3-3 3" fill="none" stroke="#fff" strokeWidth="1.600" /></svg>
      </div>

      {/* dropdown */}
      <div className="absolute left-[786px] top-[150px] w-[127px] h-[93px] rounded-[4px] border-2 border-[#8a8a8a] bg-[#f6f6f6] shadow-[1px_2px_4px_rgba(0,0,0,0.35)] pt-[3px] px-[3px] text-[12px] z-10">
        <div className="h-[26px] flex items-center pl-[14px] rounded-[2px] border border-[#d8c07c] bg-gradient-to-r from-[#fdf5d0] via-[#fbe99a] to-[#fbe08a]"><AddT /><span className="ml-[3px]">添加文本工具</span></div>
        <div className="h-[28px] flex items-center pl-[15px]"><AddImg /><span className="ml-[3px]">添加图像...</span></div>
        <div className="h-[28px] flex items-center pl-[15px]"><AddQR /><span className="ml-[3px]">添加条码...</span></div>
      </div>

      {/* VIP popup */}
      <div className="absolute left-[980px] top-[862px] w-[298px] h-[168px] rounded-[4px] bg-gradient-to-r from-[#fbe0ba] to-[#fdd8a2] shadow-[-3px_2px_10px_rgba(0,0,0,0.4)] z-10 flex flex-col overflow-hidden">
        <svg className="absolute left-0 top-0" width="298" height="168" viewBox="0 0 298 168" fill="none" stroke="#fcd5a4" strokeWidth="4">
          <path d="M210 168V70l45-20 43 14M235 168V85" />
          <path d="M0 108h22l20 20v40" />
        </svg>
        <div className="relative flex items-center mt-[49px] ml-[30px]">
          <VipBadge />
          <div className="ml-[14px] text-[14px] leading-[20px] text-[#7a5b3e]">
            <div>试用版将无法进行保存</div>
            <div>开通VIP即可保存文件</div>
          </div>
        </div>
        <div className="relative ml-[65px] mt-[17px] w-[168px] h-[33px] rounded-[3px] bg-gradient-to-b from-[#444] to-[#222] flex items-center pl-[45px] text-[14px] text-[#f6d8ac]">立即开通VIP</div>
      </div>

      {/* watermark */}
      <div className="absolute left-[1172px] top-[982px] z-20 text-[24px] leading-[30px] font-bold text-[#3d7fc4] opacity-70 whitespace-nowrap">极光下载站</div>
      <div className="absolute left-[1190px] top-[1014px] z-20 text-[16.5px] leading-[18px] font-bold text-[#5fa648] opacity-90 font-['Liberation_Sans',sans-serif]">www.xz7.com</div>
      <svg className="absolute left-[1105px] top-[985px] z-20" width="70" height="50" viewBox="0 0 70 50">
        <path d="M2 4h22l8 12L62 2 34 24l-4 10L6 48l14-18 4-10z" fill="#9aa3ad" opacity=".75" />
        <path d="M30 42q16 6 28-2-12 2-24-4z" fill="#4aa04a" opacity=".8" />
      </svg>

      {/* red arrows */}
      <svg className="absolute left-0 top-0 z-30 pointer-events-none" width="1303" height="1040" viewBox="0 0 1303 1040">
        <path d="M691 184 789 142 786 137 809 137 798 155 795 150 693 187z" fill="#e8181f" />
        <path d="M904 241 891 193 896 193 878 174 878 195 884 193 899 242z" fill="#e8181f" />
      </svg>
    </div>
  );
}
